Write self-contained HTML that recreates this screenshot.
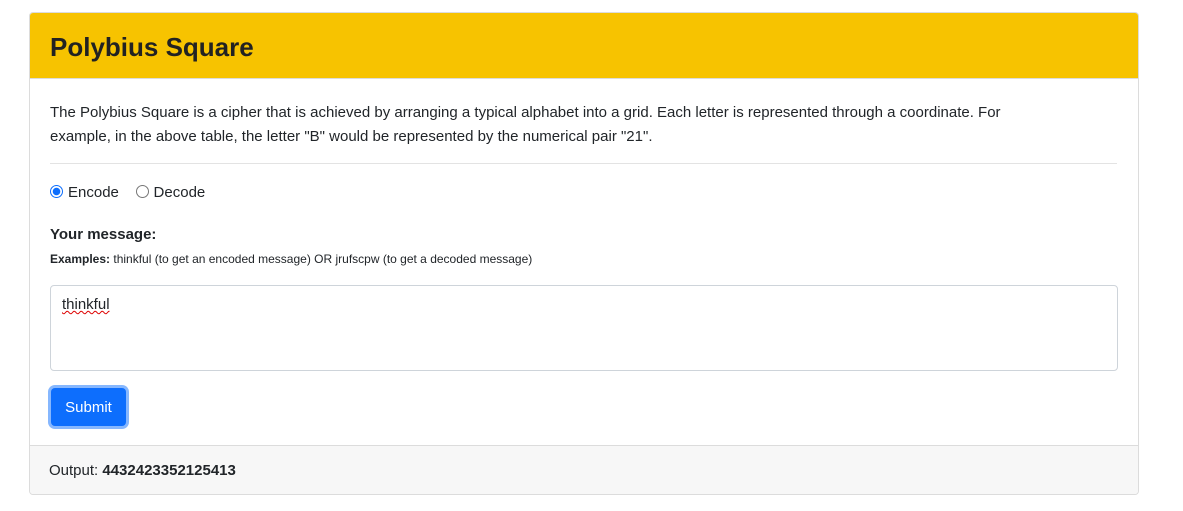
<!DOCTYPE html>
<html><head><style>
body{margin:0;background:#fff;font-family:"Liberation Sans",sans-serif;color:#212529;}
.card{position:absolute;left:29px;top:12px;width:1108px;height:481px;border:1px solid #dcdcdc;border-radius:4px;overflow:hidden;}
.hd{height:65px;background:#f7c300;border-bottom:1px solid #dcdcdc;}
.hd h1{margin:0;position:absolute;left:20px;top:19px;font-size:26px;font-weight:bold;color:#222;}
.t{position:absolute;font-size:15px;}
.hr{position:absolute;left:20px;width:1067px;top:150px;height:1px;background:#e3e3e3;}
.radio{display:inline-block;width:13px;height:13px;border-radius:50%;border:1px solid #777;vertical-align:-1px;margin-right:5px;box-sizing:border-box}
.radio.on{border:1px solid #0d6efd;background:radial-gradient(#0d6efd 0 3.5px,#fff 4px);}
.ta{position:absolute;left:20px;top:272px;width:1068px;height:86px;border:1px solid #ced4da;border-radius:4px;box-sizing:border-box;}
.btn{position:absolute;left:21px;top:375px;width:75px;height:38px;background:#0d6efd;color:#fff;border-radius:4px;box-shadow:0 0 0 3px #86b7fe;font-size:15px;text-align:center;line-height:40px;}
.ft{position:absolute;left:0;top:432px;width:100%;height:49px;background:#f7f7f7;border-top:1px solid #dcdcdc;}
</style></head><body>
<div class="card">
<div class="hd"><h1>Polybius Square</h1></div>
<div class="t" style="left:20px;top:88px;width:1010px;line-height:24px;">The Polybius Square is a cipher that is achieved by arranging a typical alphabet into a grid. Each letter is represented through a coordinate. For example, in the above table, the letter "B" would be represented by the numerical pair "21".</div>
<div class="hr"></div>
<div class="t" style="left:20px;top:171px;"><span class="radio on"></span>Encode &nbsp;&nbsp;&nbsp;<span class="radio"></span>Decode</div>
<div class="t" style="left:20px;top:213px;font-weight:bold;">Your message:</div>
<div class="t" style="left:20px;top:239px;font-size:12px;"><b>Examples:</b> thinkful (to get an encoded message) OR jrufscpw (to get a decoded message)</div>
<div class="ta"><span class="t" style="left:11px;top:10px;text-decoration:underline wavy #d00;text-decoration-thickness:1px;">thinkful</span></div>
<div class="btn">Submit</div>
<div class="ft"><span class="t" style="left:19px;top:16px;">Output: <b>4432423352125413</b></span></div>
</div>
</body></html>
